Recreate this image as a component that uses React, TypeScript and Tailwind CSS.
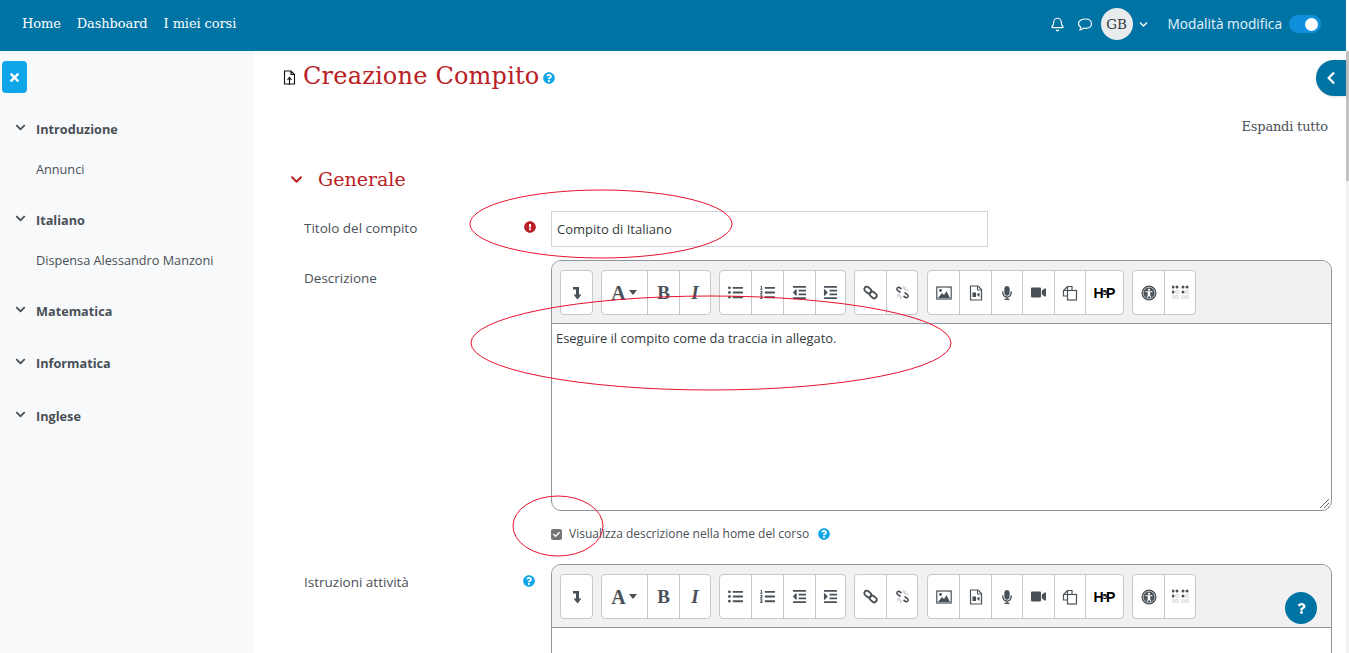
import React from "react";
import { FaChevronDown, FaChevronLeft, FaTimes, FaQuestionCircle, FaExclamationCircle, FaQuestion, FaListUl, FaListOl, FaOutdent, FaIndent, FaVideo, FaMicrophone, FaCheck } from "react-icons/fa";
import { Bell } from "lucide-react";

const C = "#495057";
const RED = "#b92025";

function Collapse() {
  return (
    <svg width="10" height="14" viewBox="0 0 10 14" fill={C}>
      <path d="M1 1h6v7.500h2.500L5.500 13.500 1.500 8.500H4V3.500H1z" />
    </svg>
  );
}
function ImageIcon() {
  return (
    <svg width="16" height="16" viewBox="0 0 16 16">
      <rect x="0.800" y="2" width="14.400" height="12" fill="none" stroke={C} strokeWidth="1.200" />
      <path d="M2 13l4-5 2 2 2.500-4L14 13z" fill={C} />
      <circle cx="4.500" cy="5.500" r="1.400" fill={C} />
    </svg>
  );
}
function MediaIcon() {
  return (
    <svg width="16" height="16" viewBox="0 0 16 16">
      <path d="M2.500 1h7.500l3.500 3.500V15h-11z" fill="none" stroke={C} strokeWidth="1.200" />
      <path d="M9.500 1v4h4" fill="none" stroke={C} strokeWidth="1" />
      <path d="M4.500 7.500h3.500v4.500H4.500zM8.500 9.700L11.500 7.500v4.500z" fill={C} />
    </svg>
  );
}
function ManageIcon() {
  return (
    <svg width="16" height="16" viewBox="0 0 16 16" fill="none" stroke={C} strokeWidth="1.200">
      <path d="M5.500 11H1.500V5.500L5.500 1.500H10V5.500" />
      <path d="M5.500 1.500V5.500H1.500" />
      <rect x="5.500" y="5.500" width="9" height="9.500" fill="#fff" />
    </svg>
  );
}
function AccessIcon() {
  return (
    <svg width="16" height="16" viewBox="0 0 16 16">
      <circle cx="8" cy="8" r="7.500" fill={C} />
      <circle cx="8" cy="8" r="5.800" fill="none" stroke="#fff" strokeWidth="0.600" />
      <circle cx="8" cy="4.800" r="1.100" fill="#fff" />
      <path d="M4.500 6.300h7v1H9.200v2.200l1 3h-1L8 10.500l-1.200 2h-1l1-3V7.300H4.500z" fill="#fff" />
    </svg>
  );
}
function BrailleIcon() {
  const cols = [1, 5, 11, 15];
  const rows = [2, 7, 12];
  return (
    <svg width="17" height="15" viewBox="0 0 17 15">
      {cols.map((x, i) =>
        rows.map((y, j) =>
          j === 0 || (j === 1 && i % 2 === 0) ? (
            <circle key={x + "-" + y} cx={x} cy={y} r="1.500" fill={C} />
          ) : (
            <rect key={x + "-" + y} x={x - 1.2} y={y - 1.2} width="2.400" height="2.400" fill="none" stroke="#cfcfcf" strokeWidth="0.800" />
          )
        )
      )}
    </svg>
  );
}
function LinkIcon() {
  return (
    <svg width="15" height="15" viewBox="0 0 15 15" fill="none" stroke={C} strokeWidth="1.800">
      <rect x="1" y="2.500" width="7.500" height="5" rx="2.500" transform="rotate(40 4.750 5)" />
      <rect x="6.500" y="7.500" width="7.500" height="5" rx="2.500" transform="rotate(40 10.250 10)" />
    </svg>
  );
}
function UnlinkIcon() {
  return (
    <svg width="15" height="15" viewBox="0 0 15 15" fill="none">
      <path d="M5.500 7.500L2.500 5.500C1 4 2.500 1.500 4.500 2.500L6.500 4" stroke={C} strokeWidth="1.600" />
      <path d="M9.500 7.500L12.500 9.500C14 11 12.500 13.500 10.500 12.500L8.500 11" stroke={C} strokeWidth="1.600" />
      <path d="M9 1v3M11 2.500l-1.500 2M13.500 5h-3M2 10h3M3 12.500l2-2M6 14v-3" stroke="#a9b0b7" strokeWidth="0.900" />
    </svg>
  );
}
function ChatBubble() {
  return (
    <svg width="16" height="15" viewBox="0 0 16 15" fill="none" stroke="#fff" strokeWidth="1.200">
      <path d="M8.500 2C4.500 2 1.500 4 1.500 6.700c0 1.500 1 2.700 2.300 3.500L3 13c1.500-.3 2.800-1 3.600-1.800.6.100 1.200.2 1.900.2 3.500 0 6-2 6-4.700S12 2 8.500 2z" />
    </svg>
  );
}
function H5P() {
  return (
    <span className="flex items-center text-[14px] font-black text-black font-['Liberation_Sans',sans-serif] leading-none">
      <span>H</span>
      <span className="text-[8px] -mx-[1px]">5</span>
      <span>P</span>
    </span>
  );
}

function Btn({ w, children, last }: { w: string; children?: React.ReactNode; last?: boolean }) {
  return (
    <div className={`${w} h-full flex items-center justify-center ${last ? "" : "border-r border-[#c8c8c8]"}`} style={{ color: C }}>
      {children}
    </div>
  );
}
function Group({ children, className = "" }: { children: React.ReactNode; className?: string }) {
  return <div className={`h-[45px] flex bg-white border border-[#c8c8c8] rounded-[4px] ${className}`}>{children}</div>;
}

const SERIF = "font-['Liberation_Serif',serif] font-bold";

function Toolbar() {
  return (
    <div className="h-[63px] bg-[#f1f1f1] rounded-t-[10px] border-b border-[#8f959e] pl-[8px] pt-[9px] flex gap-[8px]">
      <Group><Btn w="w-[31px]" last><Collapse /></Btn></Group>
      <Group>
        <Btn w="w-[46px]">
          <span className={`${SERIF} text-[20px] leading-none`}>A</span>
          <svg width="10" height="6" viewBox="0 0 10 6" className="ml-[2px]" fill={C}><path d="M1 0h8L5 5z" /></svg>
        </Btn>
        <Btn w="w-[32px]"><span className={`${SERIF} text-[19px] leading-none`}>B</span></Btn>
        <Btn w="w-[30px]" last><span className={`${SERIF} italic text-[19px] leading-none`}>I</span></Btn>
      </Group>
      <Group>
        <Btn w="w-[32px]"><FaListUl size={15} /></Btn>
        <Btn w="w-[32px]"><FaListOl size={15} /></Btn>
        <Btn w="w-[32px]"><FaOutdent size={15} /></Btn>
        <Btn w="w-[29px]" last><FaIndent size={15} /></Btn>
      </Group>
      <Group>
        <Btn w="w-[32px]"><LinkIcon /></Btn>
        <Btn w="w-[30px]" last><UnlinkIcon /></Btn>
      </Group>
      <Group className="ml-[1px]">
        <Btn w="w-[32px]"><ImageIcon /></Btn>
        <Btn w="w-[32px]"><MediaIcon /></Btn>
        <Btn w="w-[31px]"><FaMicrophone size={14} /></Btn>
        <Btn w="w-[32px]"><FaVideo size={15} /></Btn>
        <Btn w="w-[31px]"><ManageIcon /></Btn>
        <Btn w="w-[37px]" last><H5P /></Btn>
      </Group>
      <Group>
        <Btn w="w-[32px]"><AccessIcon /></Btn>
        <Btn w="w-[30px]" last><BrailleIcon /></Btn>
      </Group>
    </div>
  );
}

function Section({ title, item }: { title: string; item?: string }) {
  return (
    <div>
      <div className="flex items-center h-[20px]">
        <FaChevronDown size={11} className="ml-[15px] -mt-[5px] text-[#495057]" />
        <span className="ml-[10px] text-[12.7px] font-bold text-[#495057]">{title}</span>
      </div>
      {item && <div className="pl-[36px] mt-[19px] h-[20px] leading-[20px] text-[12.7px] text-[#495057]">{item}</div>}
    </div>
  );
}

export default function App() {
  return (
    <div className="relative h-screen overflow-hidden bg-white font-['Open_Sans',sans-serif] pr-[3px]">
      <header className="h-[51px] bg-[#0073a5] flex items-center text-white pb-[3px]">
        <nav className="flex items-center pl-[22px] gap-[16px] font-['DejaVu_Serif',serif] text-[13px] tracking-[-0.1px] text-white">
          <span>Home</span>
          <span>Dashboard</span>
          <span>I miei corsi</span>
        </nav>
        <div className="ml-auto flex items-center pr-[25px]">
          <Bell size={15} strokeWidth={1.800} />
          <div className="ml-[12px]"><ChatBubble /></div>
          <div className="ml-[8px] w-[32px] h-[32px] rounded-full bg-[#e9ecef] text-[#343a40] flex items-center justify-center font-['DejaVu_Serif',serif] text-[13.500px]">GB</div>
          <FaChevronDown size={9} className="ml-[6px]" />
          <span className="ml-[20px] text-[13.700px] text-[#e6f3fa]">Modalità modifica</span>
          <div className="ml-[7px] w-[32px] h-[18px] rounded-full bg-[#0f8fdc] flex items-center justify-end pr-[3px]">
            <div className="w-[13px] h-[13px] rounded-full bg-white" />
          </div>
        </div>
      </header>

      <div className="flex h-[602px]">
        <aside className="w-[254px] bg-[#f8f9fa] shrink-0 pl-[2px] pt-[10px] relative">
          <div className="w-[25px] h-[32px] rounded-[4px] bg-[#0ea5e9] text-white flex items-center justify-center">
            <FaTimes size={13} />
          </div>
          <div className="-ml-[2px] mt-[27px] flex flex-col">
            <div className="h-[91px]"><Section title="Introduzione" item="Annunci" /></div>
            <div className="h-[91px]"><Section title="Italiano" item="Dispensa Alessandro Manzoni" /></div>
            <div className="h-[52px]"><Section title="Matematica" /></div>
            <div className="h-[53px]"><Section title="Informatica" /></div>
            <Section title="Inglese" />
          </div>
        </aside>

        <main className="flex-1 pl-[29px] pt-[9px] min-w-0">
          <div className="flex items-center h-[32px]">
            <svg width="13" height="16" viewBox="0 0 13 16" fill="none" stroke="#111" strokeWidth="1.100" className="mt-[3px]">
              <path d="M1.500 1h6.500l3.500 3.500V14h-10zM8 1v3.500h3.500" />
              <path d="M6.500 15V8M4.500 10l2-2.500 2 2.500" />
            </svg>
            <h1 className="ml-[7px] font-['DejaVu_Serif',serif] text-[24px] tracking-[0.2px] text-[#b92025] leading-none">Creazione Compito</h1>
            <FaQuestionCircle size={12} className="ml-[3px] mt-[3px] text-[#0ea5e9]" />
          </div>

          <div className="mt-[25px] h-[20px] leading-[20px] text-right pr-[18px] font-['DejaVu_Serif',serif] text-[13px] tracking-[-0.2px] text-[#495057]">Espandi tutto</div>

          <div className="mt-[30px] flex items-center h-[24px]">
            <FaChevronDown size={13} className="ml-[7px]" style={{ color: RED }} />
            <h2 className="ml-[15px] font-['DejaVu_Serif',serif] text-[19px] text-[#b92025]">Generale</h2>
          </div>

          <div className="mt-[20px] flex h-[36px]">
            <div className="w-[241px] shrink-0 pl-[21px] pt-[7px] text-[13.500px] text-[#495057]">Titolo del compito</div>
            <div className="w-[27px] shrink-0 pt-[10px]"><FaExclamationCircle size={12} className="text-[#b92025]" /></div>
            <div className="w-[437px] shrink-0 h-[36px] border border-[#ced4da] pl-[5px] flex items-center text-[13px] text-[#343a40] pt-[2px]">Compito di Italiano</div>
          </div>

          <div className="mt-[13px] flex">
            <div className="w-[268px] shrink-0 pl-[21px] pt-[8px] text-[13.500px] text-[#495057]">Descrizione</div>
            <div className="w-[781px] shrink-0 h-[251px] border border-[#8f959e] rounded-[10px] flex flex-col relative">
              <Toolbar />
              <div className="pl-[4px] pt-[5px] text-[12.900px] text-[#343a40]">Eseguire il compito come da traccia in allegato.</div>
              <svg width="12" height="12" viewBox="0 0 12 12" className="absolute right-[1px] bottom-[1px]" stroke="#666" strokeWidth="1">
                <path d="M2 11L11 2M6 11l5-5M10 11l1-1" />
              </svg>
            </div>
          </div>

          <div className="mt-[13px] ml-[268px] flex items-center h-[20px]">
            <span className="w-[11px] h-[11px] rounded-[2px] bg-[#757575] flex items-center justify-center"><FaCheck size={7} className="text-white" /></span>
            <span className="ml-[7px] text-[12px] text-[#495057]">Visualizza descrizione nella home del corso</span>
            <FaQuestionCircle size={12} className="ml-[9px] text-[#0ea5e9]" />
          </div>

          <div className="mt-[20px] flex">
            <div className="w-[240px] shrink-0 pl-[21px] pt-[8px] text-[13.500px] text-[#495057]">Istruzioni attività</div>
            <div className="w-[28px] shrink-0 pt-[11px]"><FaQuestionCircle size={12} className="text-[#0ea5e9]" /></div>
            <div className="w-[781px] shrink-0 h-[200px] border border-[#8f959e] rounded-[10px]">
              <Toolbar />
            </div>
          </div>
        </main>
      </div>

      <div className="absolute top-[51px] right-0 w-[3px] h-[602px] bg-[#f1f1f1]">
        <div className="h-[130px] bg-[#c1c1c1]" />
      </div>

      <div className="absolute top-[60px] right-[3px] w-[30px] h-[36px] bg-[#0073a5] rounded-l-[18px] flex items-center justify-center text-white shadow-sm">
        <FaChevronLeft size={14} />
      </div>
      <div className="absolute left-[1285px] top-[592px] w-[32px] h-[32px] rounded-full bg-[#0073a5] text-white flex items-center justify-center">
        <FaQuestion size={11} />
      </div>

      <svg className="absolute inset-0 pointer-events-none" width="1349" height="653" fill="none" stroke="#e8112d" strokeWidth="1">
        <ellipse cx="601" cy="224" rx="131" ry="34" />
        <ellipse cx="711" cy="343" rx="240" ry="47" />
        <ellipse cx="558" cy="526" rx="45" ry="30" />
      </svg>
    </div>
  );
}
